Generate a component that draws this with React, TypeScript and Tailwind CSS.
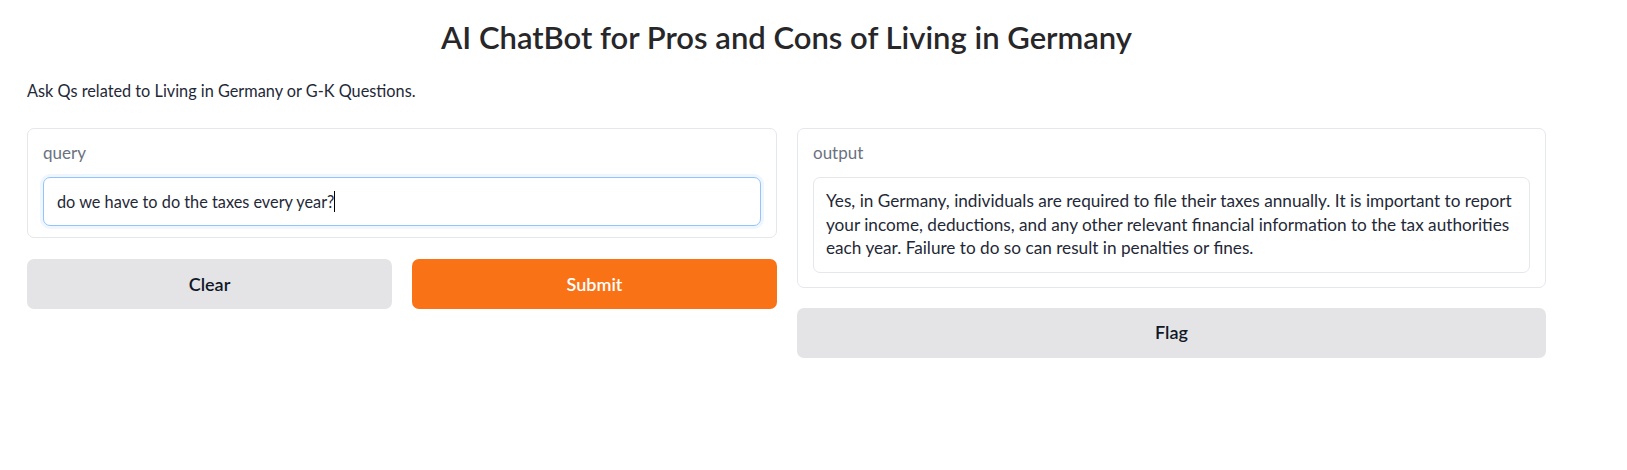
import React from 'react';

const answerLines = [
    'Yes, in Germany, individuals are required to file their taxes annually. It is important to report',
    'your income, deductions, and any other relevant financial information to the tax authorities',
    'each year. Failure to do so can result in penalties or fines.',
];

const Block: React.FC<{ label: string; className?: string; children: React.ReactNode }> = ({ label, className, children }) => (
    <div className={`bg-white border border-[#e5e7eb] rounded-[7px] px-[15px] pt-[13px] ${className ?? ''}`}>
        <div className="text-[17px] leading-[22px] text-[#6b7280] mb-[13px]">{label}</div>
        {children}
    </div>
);

export default function App() {
    return (
        <div className="min-h-screen bg-white text-[#1f2937] font-['Lato','Liberation_Sans',sans-serif]">
            <div className="ml-[27px] w-[1519px]">
                <h1 className="pt-[19px] text-center text-[31px] leading-[37px] font-semibold text-[#27272a]">
                    AI ChatBot for Pros and Cons of Living in Germany
                </h1>
                <p className="mt-[23px] text-[16.3px] leading-[24px]">Ask Qs related to Living in Germany or G-K Questions.</p>

                <div className="mt-[25px] flex items-start gap-5">
                    <div className="w-[750px] flex flex-col gap-[21px]">
                        <Block label="query" className="pb-[11px]">
                            <div className="h-[49px] flex items-center px-[13px] rounded-[7px] border border-[#93c5fd] shadow-[0_0_0_3px_#eff6ff] bg-white text-[16.3px] leading-[24px]">
                                do we have to do the taxes every year?
                                <span className="inline-block w-px h-[21px] bg-black" />
                            </div>
                        </Block>
                        <div className="grid grid-cols-2 gap-5">
                            <button className="h-[50px] rounded-[7px] bg-[#e4e4e7] text-[18px] font-semibold text-[#111827]">Clear</button>
                            <button className="h-[50px] rounded-[7px] bg-[#f97316] text-[18px] font-semibold text-white">Submit</button>
                        </div>
                    </div>

                    <div className="w-[749px] flex flex-col gap-[20px]">
                        <Block label="output" className="pb-[14px]">
                            <div className="rounded-[7px] border border-[#e5e7eb] px-[12px] pt-[11px] pb-[12px] text-[17.2px] leading-[23.5px]">
                                {answerLines.map((line) => (
                                    <div key={line} className="whitespace-nowrap">{line}</div>
                                ))}
                            </div>
                        </Block>
                        <button className="h-[50px] rounded-[7px] bg-[#e4e4e7] text-[18px] font-semibold text-[#111827]">Flag</button>
                    </div>
                </div>
            </div>
        </div>
    );
}
